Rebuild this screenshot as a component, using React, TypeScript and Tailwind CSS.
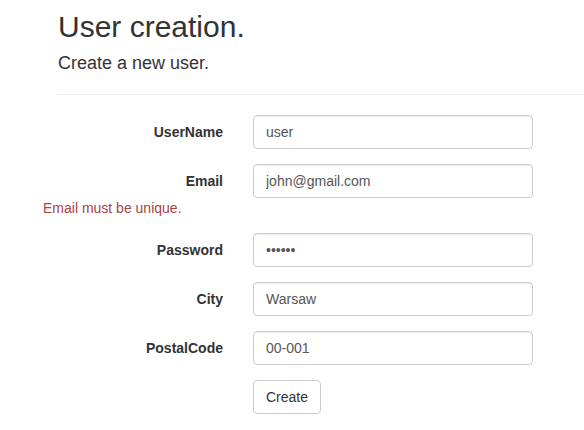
import React from 'react';

const fields = [
  { label: 'UserName', value: 'user', type: 'text' },
  { label: 'Email', value: 'john@gmail.com', type: 'text', error: 'Email must be unique.' },
  { label: 'Password', value: '123456', type: 'password' },
  { label: 'City', value: 'Warsaw', type: 'text' },
  { label: 'PostalCode', value: '00-001', type: 'text' },
];

const App: React.FC = () => {
  return (
    <div className="min-h-screen bg-white pl-[58px] text-[#333] font-['Liberation_Sans',Arial,sans-serif] text-[14px] leading-[20px] overflow-hidden">
      {/* Header */}
      <h2 className="mt-[10px] text-[30px] leading-[33px] font-normal">User creation.</h2>
      <h4 className="mt-[10px] text-[18px] leading-[20px] font-normal">Create a new user.</h4>
      <hr className="mt-[21px] w-[600px] border-0 border-t border-[#eee]" />

      {/* Form */}
      <form className="mt-[20px]" onSubmit={(e) => e.preventDefault()}>
        {fields.map((field) => (
          <div key={field.label} className="mb-[15px]">
            <div className="flex">
              <label className="w-[165px] pt-[7px] text-right font-bold">{field.label}</label>
              <input
                type={field.type}
                defaultValue={field.value}
                className="ml-[30px] h-[34px] w-[280px] rounded-[4px] border border-[#ccc] bg-white px-[12px] py-[6px] text-[14px] text-[#555] shadow-[inset_0_1px_1px_rgba(0,0,0,0.075)] outline-none"
              />
            </div>
            {field.error && (
              <span className="-ml-[15px] block text-[#a94442]">{field.error}</span>
            )}
          </div>
        ))}

        <div className="pl-[195px]">
          <button
            type="submit"
            className="h-[34px] rounded-[4px] border border-[#ccc] bg-white px-[12px] py-[6px] text-[14px] text-[#333]"
          >
            Create
          </button>
        </div>
      </form>
    </div>
  );
};

export default App;
